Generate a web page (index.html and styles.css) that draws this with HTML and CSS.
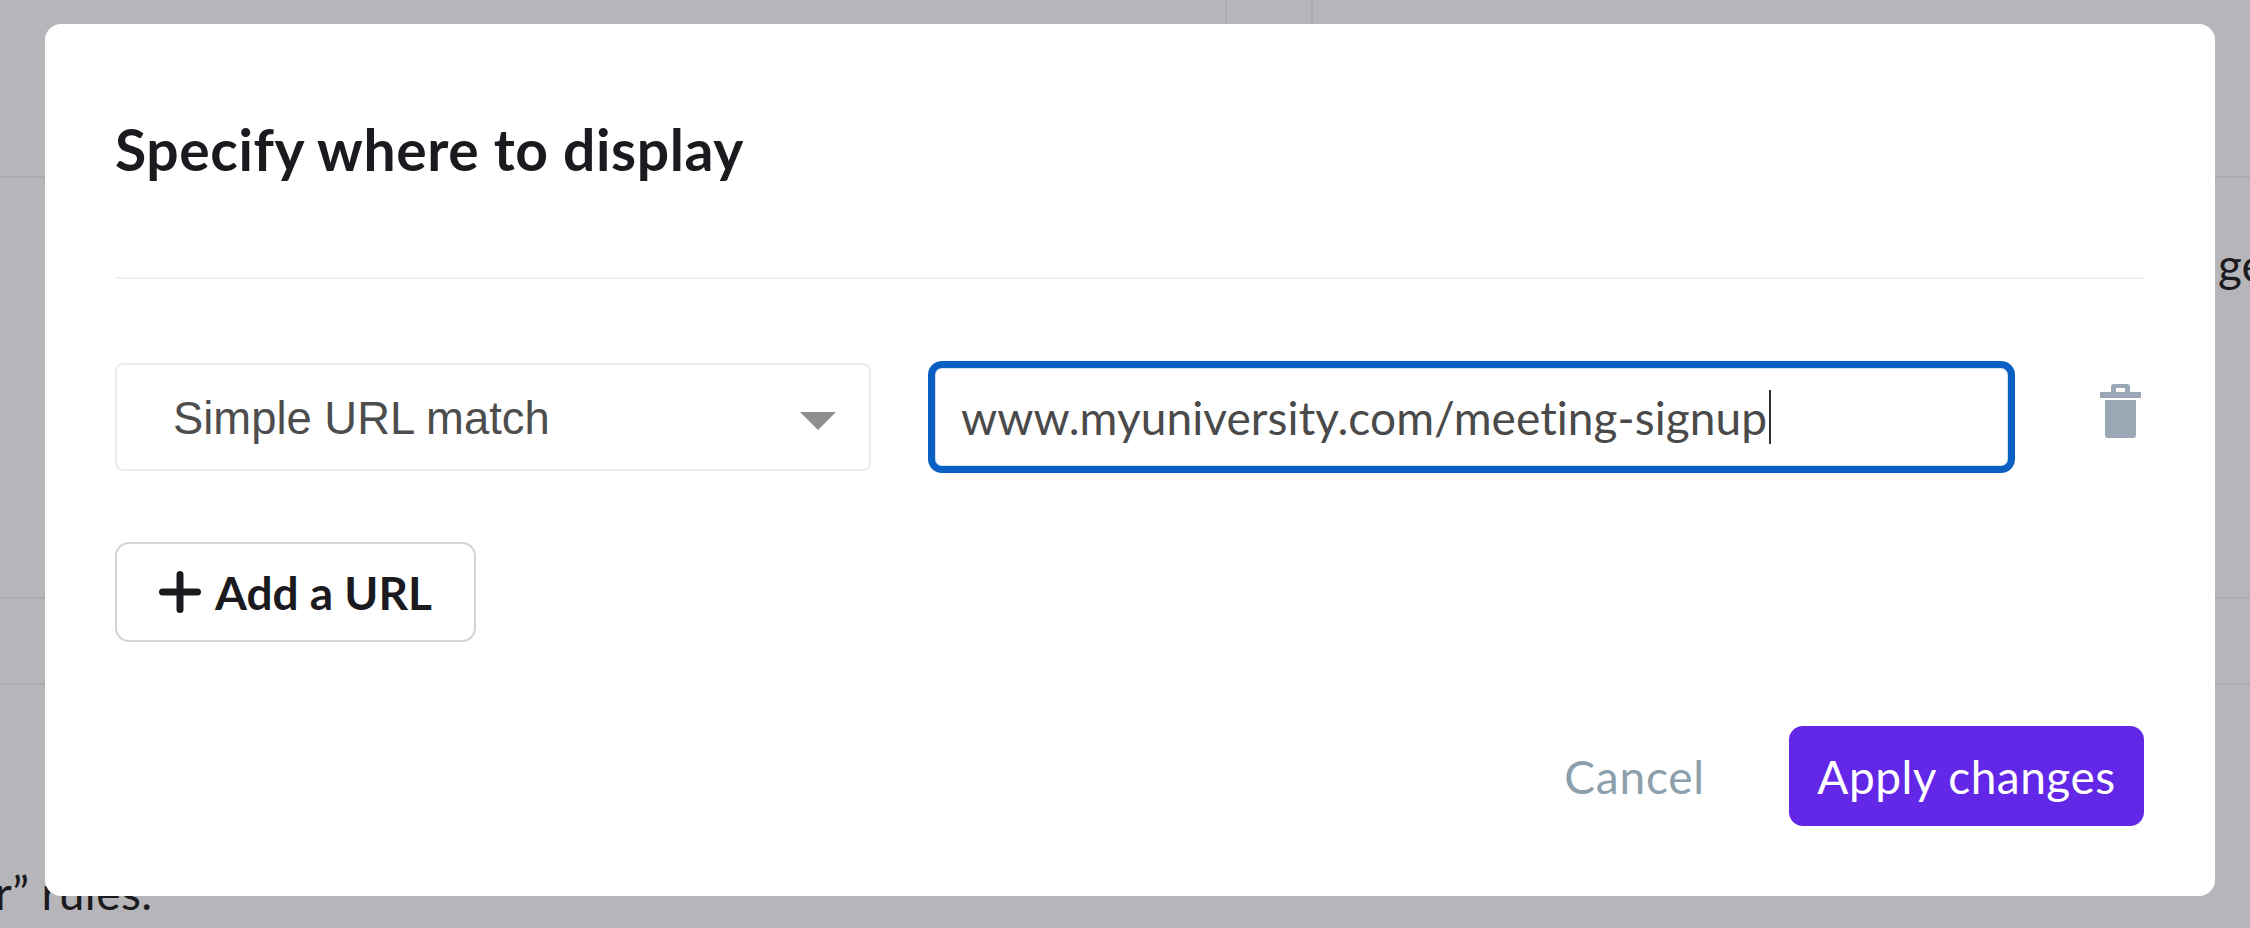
FILE: index.html
```html
<!DOCTYPE html>
<html lang="en">
<head>
  <meta charset="UTF-8">
  <title>Specify where to display</title>
  <link rel="stylesheet" href="styles.css">
</head>
<body>

<!-- page behind the dialog -->
<div class="page">
  <div class="row row-top">
    <div class="cell"></div>
  </div>
  <div class="row row-mid">
    <span class="edge-text">ge</span>
  </div>
  <div class="row row-thin"></div>
  <div class="row-end">
    <span class="end-text">r” rules.</span>
  </div>
</div>

<div class="overlay">
  <div class="modal">
    <h2 class="modal-title">Specify where to display</h2>
    <div class="rule-row">
      <div class="select">
        <span class="select-text">Simple URL match</span>
        <span class="select-arrow"></span>
      </div>
      <div class="url-input">
        <span>www.myuniversity.com/meeting-signup</span><span class="caret"></span>
      </div>
      <svg class="trash" viewBox="0 0 41 54" aria-label="Delete">
        <path d="M11 8V3a3 3 0 0 1 3-3h13a3 3 0 0 1 3 3v5h-5V4H16v4z" />
        <rect x="0" y="8" width="41" height="6" />
        <path d="M5 16h31v35a3 3 0 0 1-3 3H8a3 3 0 0 1-3-3z" />
      </svg>
    </div>
    <button class="add-btn">
      <svg class="plus" viewBox="0 0 42 42"><path d="M21 3.500v35M3.500 21h35" /></svg>
      Add a URL
    </button>
    <div class="actions">
      <button class="cancel-btn">Cancel</button>
      <button class="apply-btn">Apply changes</button>
    </div>
  </div>
</div>

</body>
</html>
```

FILE: styles.css
```css
html, body {
  margin: 0;
  padding: 0;
  height: 100%;
}

body {
  position: relative;
  overflow: hidden;
  background-color: #b6b5b9;
  font-family: "Lato", sans-serif;
  font-variant-ligatures: none;
  color: #1b1b1f;
}

.page {
  height: 928px;
  display: flex;
  flex-direction: column;
}

.row {
  border-bottom: 2px solid #acabaf;
  box-sizing: border-box;
}

.row-top {
  height: 178px;
  padding-left: 1225px;
}

.cell {
  width: 88px;
  height: 100%;
  box-sizing: border-box;
  border-left: 2px solid #acabaf;
  border-right: 2px solid #acabaf;
}

.row-mid {
  height: 421px;
  padding: 59px 0 0 2218px;
  white-space: nowrap;
  overflow: hidden;
  font-size: 46px;
  line-height: 56px;
}

.edge-text {
  display: block;
}

.row-thin {
  height: 86px;
}

.row-end {
  padding-top: 180px;
  white-space: nowrap;
  font-size: 46px;
  line-height: 56px;
  letter-spacing: 0.5px;
}

.end-text {
  display: block;
  margin-left: -5px;
}

/* dialog */
.overlay {
  position: absolute;
  top: 24px;
  left: 45px;
}

.modal {
  width: 2170px;
  height: 872px;
  box-sizing: border-box;
  padding: 0 71px 70px 70px;
  background-color: #fff;
  border-radius: 16px;
  display: flex;
  flex-direction: column;
}

.modal-title {
  margin: 0;
  padding: 92px 0 95px;
  border-bottom: 2px solid #f0f0f1;
  font-size: 57px;
  line-height: 66px;
  font-weight: 700;
  letter-spacing: 0.6px;
  color: #1b1b1f;
}

.rule-row {
  display: flex;
  align-items: flex-start;
  margin-top: 82px;
}

.select {
  width: 756px;
  height: 108px;
  box-sizing: border-box;
  border: 2px solid #ececee;
  border-radius: 8px;
  padding: 0 33px 0 56px;
  margin-top: 2px;
  display: flex;
  align-items: center;
  justify-content: space-between;
  font-family: "Liberation Sans", sans-serif;
  font-size: 45.4px;
  color: #4d4d4d;
}

.select-text {
  padding-top: 3px;
}

.select-arrow {
  width: 0;
  height: 0;
  margin-top: 8px;
  border-left: 18px solid transparent;
  border-right: 18px solid transparent;
  border-top: 18px solid #8f8f8f;
}

.url-input {
  width: 1087px;
  height: 112px;
  box-sizing: border-box;
  margin-left: 57px;
  border: 7px solid #0a60c2;
  border-radius: 14px;
  padding-left: 26px;
  display: flex;
  align-items: center;
  font-size: 46px;
  letter-spacing: 0.08px;
  color: #4a4a4a;
  box-shadow: inset 0 0 0 1px #d5e4f5;
}

.caret {
  width: 2px;
  height: 54px;
  margin-left: 2px;
  background-color: #333;
}

.trash {
  width: 41px;
  height: 54px;
  margin: 23px 0 0 85px;
  fill: #9aa7b5;
}

.add-btn {
  width: 361px;
  height: 100px;
  box-sizing: border-box;
  margin-top: 69px;
  padding: 0 0 0 42px;
  border: 2px solid #d4d4d6;
  border-radius: 14px;
  background-color: #fff;
  display: flex;
  align-items: center;
  gap: 14px;
  font-family: "Lato", sans-serif;
  font-size: 46px;
  font-weight: 700;
  color: #1b1b1f;
}

.plus {
  width: 42px;
  height: 42px;
  fill: none;
  stroke: #1b1b1f;
  stroke-width: 7;
  stroke-linecap: round;
}

.actions {
  margin-top: auto;
  display: flex;
  justify-content: flex-end;
  align-items: center;
  gap: 84px;
}

.cancel-btn {
  padding: 0;
  border: none;
  background: none;
  font-family: "Lato", sans-serif;
  font-size: 46px;
  letter-spacing: 0.8px;
  color: #8ca0ab;
}

.apply-btn {
  width: 355px;
  height: 100px;
  padding: 0;
  border: none;
  border-radius: 14px;
  background-color: #6327e8;
  font-family: "Lato", sans-serif;
  font-size: 46px;
  letter-spacing: 0.5px;
  color: #fff;
}
```
